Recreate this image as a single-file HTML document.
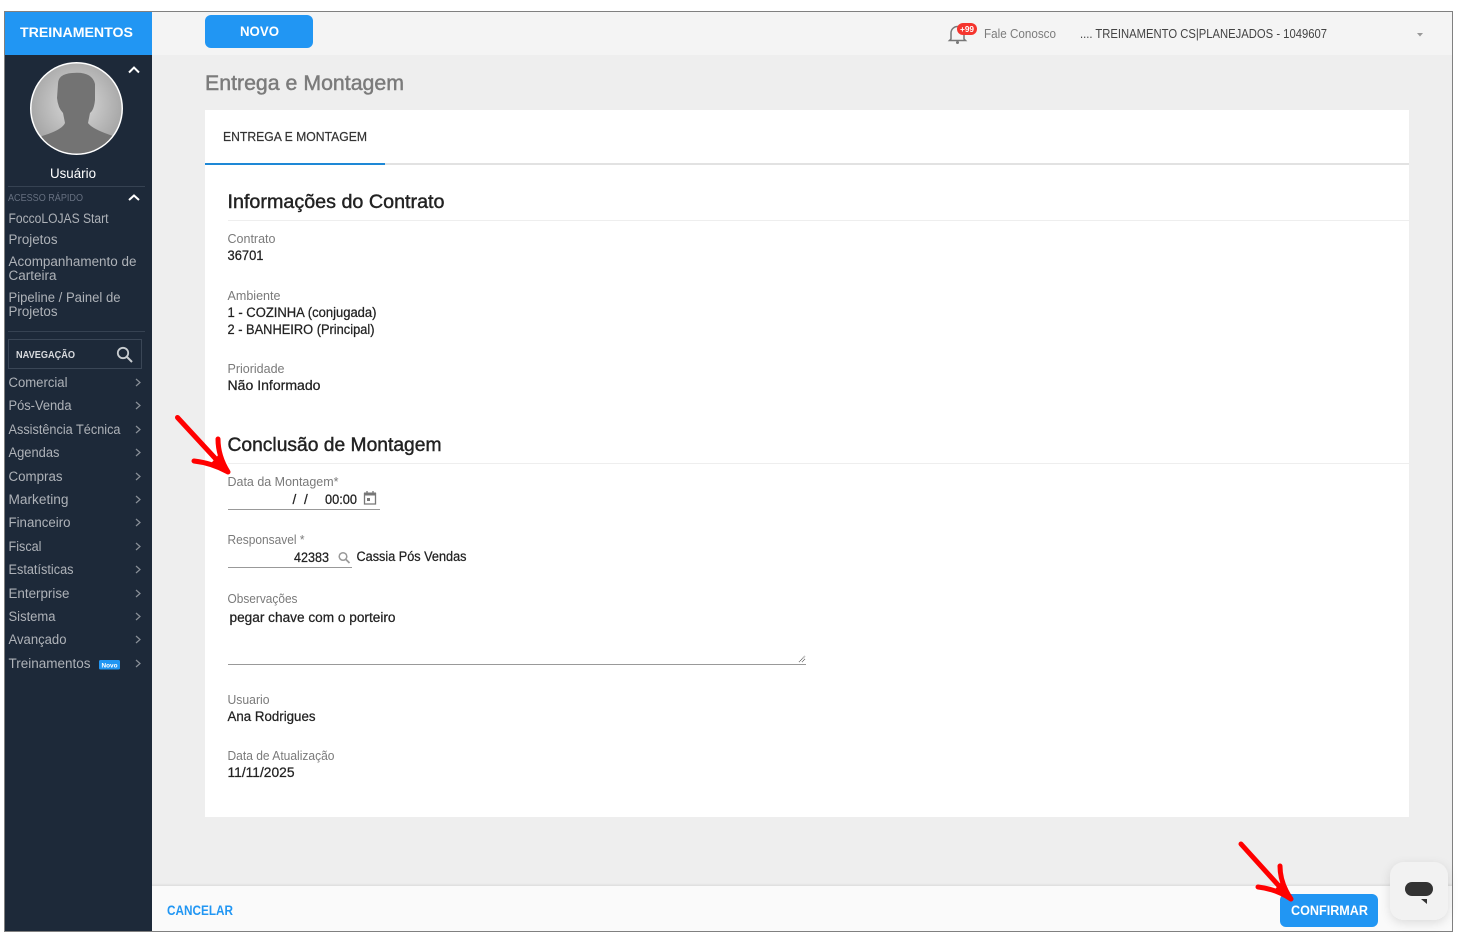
<!DOCTYPE html>
<html lang="pt"><head><meta charset="utf-8"><title>Entrega e Montagem</title>
<style>
html,body{margin:0;padding:0;background:#fff;width:1464px;height:937px;overflow:hidden}
svg{display:block;position:absolute;left:0;top:0}
text{font-family:"Liberation Sans",sans-serif;white-space:pre}
.s{font-size:13.5px;fill:#aeb2b8}
.l{font-size:12.5px;fill:#7a7a7a}
.v{font-size:13.5px;fill:#222;stroke:#222;stroke-width:.25px}
.h{font-size:19px;fill:#222;stroke:#222;stroke-width:.4px}
.c{fill:none;stroke:#8a9098;stroke-width:1.2}
.b{font-weight:bold}
</style></head><body>
<svg width="1464" height="937" viewBox="0 0 1464 937">
<defs>
<radialGradient id="av" cx="50%" cy="45%" r="55%"><stop offset="0" stop-color="#dcdcdc"/><stop offset="1" stop-color="#a4a4a4"/></radialGradient>
<clipPath id="cc"><circle cx="76.5" cy="108.5" r="45"/></clipPath>
<filter id="sh" x="-40%" y="-40%" width="180%" height="180%"><feDropShadow dx="0" dy="3" stdDeviation="5" flood-color="#000" flood-opacity=".12"/></filter>
<linearGradient id="fs" x1="0" y1="0" x2="0" y2="1"><stop offset="0" stop-color="#000" stop-opacity="0"/><stop offset="1" stop-color="#000" stop-opacity=".07"/></linearGradient>
</defs>

<!-- frame and backgrounds -->
<rect x="4.5" y="11.5" width="1448" height="920" fill="#eee" stroke="#808080"/>
<rect x="152" y="12" width="1300" height="43" fill="#f4f4f4"/>
<rect x="5" y="12" width="147" height="43" fill="#2196f3"/>
<rect x="5" y="55" width="147" height="876" fill="#1d2939"/>

<!-- brand -->
<text x="20" y="37" class="b" font-size="13.5" fill="#fff" textLength="113" lengthAdjust="spacingAndGlyphs">TREINAMENTOS</text>

<!-- avatar -->
<circle cx="76.5" cy="108.5" r="46.5" fill="#fff"/>
<circle cx="76.5" cy="108.5" r="45" fill="url(#av)"/>
<path clip-path="url(#cc)" fill="#737373" d="M58 84Q58 74 72 73Q92 71 95 84L95 100Q94 110 90 113L88 123Q92 129 113 136L125 160H28L42 136Q62 130 65 123L63 113Q58 108 57 98Z"/>
<path d="M129 72.500l5-5 5 5" fill="none" stroke="#fff" stroke-width="2"/>
<text x="50" y="178" font-size="13.5" fill="#fff" textLength="46" lengthAdjust="spacingAndGlyphs">Usuário</text>
<rect x="8" y="186" width="137" height="1" fill="#364252"/>

<!-- quick access -->
<text x="8" y="201" font-size="10" fill="#667080" textLength="75" lengthAdjust="spacingAndGlyphs">ACESSO RÁPIDO</text>
<path d="M129 200l5-4.500 5 4.500" fill="none" stroke="#fff" stroke-width="2"/>
<text x="8.500" y="223" class="s" textLength="100" lengthAdjust="spacingAndGlyphs">FoccoLOJAS Start</text>
<text x="8.500" y="244" class="s" textLength="49" lengthAdjust="spacingAndGlyphs">Projetos</text>
<text x="8.500" y="266" class="s" textLength="128" lengthAdjust="spacingAndGlyphs">Acompanhamento de</text>
<text x="8.500" y="280" class="s" textLength="48" lengthAdjust="spacingAndGlyphs">Carteira</text>
<text x="8.500" y="302" class="s" textLength="112" lengthAdjust="spacingAndGlyphs">Pipeline / Painel de</text>
<text x="8.500" y="316" class="s" textLength="49" lengthAdjust="spacingAndGlyphs">Projetos</text>
<rect x="8" y="331" width="137" height="1" fill="#364252"/>

<!-- nav search -->
<rect x="8.500" y="339.500" width="133" height="29" fill="none" stroke="#3a4656"/>
<text x="16" y="358" class="b" font-size="10" fill="#d8dade" textLength="59" lengthAdjust="spacingAndGlyphs">NAVEGAÇÃO</text>
<circle cx="123" cy="353" r="5.200" fill="none" stroke="#c8ccd0" stroke-width="1.800"/>
<path d="M127 357l5 5" stroke="#c8ccd0" stroke-width="2"/>

<!-- menu -->
<text x="8.500" y="387" class="s" textLength="59" lengthAdjust="spacingAndGlyphs">Comercial</text>
<text x="8.500" y="410" class="s" textLength="63" lengthAdjust="spacingAndGlyphs">Pós-Venda</text>
<text x="8.500" y="434" class="s" textLength="112" lengthAdjust="spacingAndGlyphs">Assistência Técnica</text>
<text x="8.500" y="457" class="s" textLength="51" lengthAdjust="spacingAndGlyphs">Agendas</text>
<text x="8.500" y="481" class="s" textLength="54" lengthAdjust="spacingAndGlyphs">Compras</text>
<text x="8.500" y="504" class="s" textLength="60" lengthAdjust="spacingAndGlyphs">Marketing</text>
<text x="8.500" y="527" class="s" textLength="62" lengthAdjust="spacingAndGlyphs">Financeiro</text>
<text x="8.500" y="551" class="s" textLength="33" lengthAdjust="spacingAndGlyphs">Fiscal</text>
<text x="8.500" y="574" class="s" textLength="65" lengthAdjust="spacingAndGlyphs">Estatísticas</text>
<text x="8.500" y="598" class="s" textLength="61" lengthAdjust="spacingAndGlyphs">Enterprise</text>
<text x="8.500" y="621" class="s" textLength="47" lengthAdjust="spacingAndGlyphs">Sistema</text>
<text x="8.500" y="644" class="s" textLength="58" lengthAdjust="spacingAndGlyphs">Avançado</text>
<text x="8.500" y="668" class="s" textLength="82" lengthAdjust="spacingAndGlyphs">Treinamentos</text>
<rect x="99" y="660" width="21" height="9.500" rx="1.500" fill="#2196f3"/>
<text x="101.500" y="667.500" class="b" font-size="6.500" fill="#fff" textLength="16" lengthAdjust="spacingAndGlyphs">Novo</text>
<path class="c" d="M136 379l4 3.500-4 3.500M136 402l4 3.500-4 3.500M136 426l4 3.500-4 3.500M136 449l4 3.500-4 3.500M136 473l4 3.500-4 3.500M136 496l4 3.500-4 3.500M136 519l4 3.500-4 3.500M136 543l4 3.500-4 3.500M136 566l4 3.500-4 3.500M136 590l4 3.500-4 3.500M136 613l4 3.500-4 3.500M136 636l4 3.500-4 3.500M136 660l4 3.500-4 3.500"/>

<!-- top bar -->
<rect x="205" y="15" width="108" height="33" rx="6" fill="#2196f3"/>
<text x="240" y="36" class="b" font-size="13.500" fill="#fff" textLength="39" lengthAdjust="spacingAndGlyphs">NOVO</text>
<path d="M951 39V33a6.500 6.500 0 0 1 13 0v6l1.500 1.500h-16Z" fill="none" stroke="#777" stroke-width="1.500"/>
<circle cx="957.500" cy="42.500" r="1.500" fill="#777"/>
<rect x="957" y="23" width="20" height="12" rx="6" fill="#f5352e"/>
<text x="960" y="32" class="b" font-size="8" fill="#fff" textLength="14" lengthAdjust="spacingAndGlyphs">+99</text>
<text x="984" y="38" font-size="12.500" fill="#7c7c7c" textLength="72" lengthAdjust="spacingAndGlyphs">Fale Conosco</text>
<text x="1080" y="38" font-size="12.500" fill="#444" textLength="247" lengthAdjust="spacingAndGlyphs">.... TREINAMENTO CS|PLANEJADOS - 1049607</text>
<path d="M1417 33h6l-3 3.500z" fill="#999"/>

<!-- page title -->
<text x="205" y="90" font-size="21" fill="#7b7b7b" stroke="#7b7b7b" stroke-width=".45" textLength="199" lengthAdjust="spacingAndGlyphs">Entrega e Montagem</text>

<!-- card -->
<rect x="205" y="110" width="1204" height="707" fill="#fff"/>
<text x="223" y="141" font-size="13" fill="#333" stroke="#333" stroke-width=".2" textLength="144" lengthAdjust="spacingAndGlyphs">ENTREGA E MONTAGEM</text>
<rect x="385" y="163" width="1024" height="2" fill="#e2e2e2"/>
<rect x="205" y="163" width="180" height="2" fill="#1e88d6"/>

<text x="227.500" y="208" class="h" textLength="217" lengthAdjust="spacingAndGlyphs">Informações do Contrato</text>
<rect x="228" y="220" width="1181" height="1" fill="#eee"/>
<text x="227.500" y="243" class="l" textLength="48" lengthAdjust="spacingAndGlyphs">Contrato</text>
<text x="227.500" y="260" class="v" textLength="36" lengthAdjust="spacingAndGlyphs">36701</text>
<text x="227.500" y="300" class="l" textLength="53" lengthAdjust="spacingAndGlyphs">Ambiente</text>
<text x="227.500" y="317" class="v" textLength="149" lengthAdjust="spacingAndGlyphs">1 - COZINHA (conjugada)</text>
<text x="227.500" y="334" class="v" textLength="147" lengthAdjust="spacingAndGlyphs">2 - BANHEIRO (Principal)</text>
<text x="227.500" y="373" class="l" textLength="57" lengthAdjust="spacingAndGlyphs">Prioridade</text>
<text x="227.500" y="390" class="v" textLength="93" lengthAdjust="spacingAndGlyphs">Não Informado</text>

<text x="227.500" y="451" class="h" textLength="214" lengthAdjust="spacingAndGlyphs">Conclusão de Montagem</text>
<rect x="228" y="463" width="1181" height="1" fill="#eee"/>
<text x="227.500" y="486" class="l" textLength="111" lengthAdjust="spacingAndGlyphs">Data da Montagem*</text>
<text x="292.500" y="504" class="v">/</text>
<text x="304" y="504" class="v">/</text>
<text x="325" y="504" class="v" textLength="32" lengthAdjust="spacingAndGlyphs">00:00</text>
<path d="M364.500 493.500h11v10.500h-11z" fill="none" stroke="#777" stroke-width="1.300"/>
<rect x="364" y="492.500" width="12" height="3" fill="#777"/>
<path d="M367 491v2M373 491v2" stroke="#777" stroke-width="1.300"/>
<rect x="367" y="498" width="3" height="3" fill="#777"/>
<rect x="228" y="509" width="152" height="1" fill="#999"/>

<text x="227.500" y="544" class="l" textLength="77" lengthAdjust="spacingAndGlyphs">Responsavel *</text>
<text x="294" y="562" class="v" textLength="35" lengthAdjust="spacingAndGlyphs">42383</text>
<circle cx="343" cy="556.500" r="3.800" fill="none" stroke="#999" stroke-width="1.500"/>
<path d="M346 559.500l3.500 3.500" stroke="#999" stroke-width="1.700"/>
<text x="356.500" y="561" class="v" textLength="110" lengthAdjust="spacingAndGlyphs">Cassia Pós Vendas</text>
<rect x="228" y="567" width="124" height="1" fill="#999"/>

<text x="227.500" y="603" class="l" textLength="70" lengthAdjust="spacingAndGlyphs">Observações</text>
<text x="229.500" y="622" class="v" textLength="166" lengthAdjust="spacingAndGlyphs">pegar chave com o porteiro</text>
<rect x="228" y="664" width="578" height="1" fill="#999"/>
<path d="M799 662l6-6M802 662l3-3" stroke="#666" stroke-width="1" stroke-dasharray="1 .6"/>

<text x="227.500" y="704" class="l" textLength="42" lengthAdjust="spacingAndGlyphs">Usuario</text>
<text x="227.500" y="721" class="v" textLength="88" lengthAdjust="spacingAndGlyphs">Ana Rodrigues</text>
<text x="227.500" y="760" class="l" textLength="107" lengthAdjust="spacingAndGlyphs">Data de Atualização</text>
<text x="227.500" y="777" class="v" textLength="67" lengthAdjust="spacingAndGlyphs">11/11/2025</text>

<!-- footer -->
<rect x="152" y="883" width="1300" height="3" fill="url(#fs)"/>
<rect x="152" y="886" width="1300" height="45" fill="#fafafa"/>
<text x="167" y="915" class="b" font-size="13.500" fill="#2196f3" textLength="66" lengthAdjust="spacingAndGlyphs">CANCELAR</text>
<rect x="1280" y="894" width="98" height="33" rx="6" fill="#2196f3"/>
<text x="1291" y="915" class="b" font-size="13.500" fill="#fff" textLength="77" lengthAdjust="spacingAndGlyphs">CONFIRMAR</text>

<!-- chat widget -->
<rect x="1390" y="862" width="58" height="58" rx="14" fill="#f2f2f2" filter="url(#sh)"/>
<rect x="1405" y="882" width="28" height="14" rx="7" fill="#333"/>
<path d="M1421 899h6v5z" fill="#333"/>

<!-- red annotation arrows -->
<g fill="none" stroke="#f00" stroke-linecap="round" stroke-linejoin="round">
<path d="M177.500 417.500L226 470" stroke-width="5"/>
<path d="M194 461Q212 463 228 472M218 439Q218 456 228 472" stroke-width="5"/>
<path d="M212 463L219 455L228 472Z" stroke-width="1" fill="#f00"/>
<path d="M1241 844L1289 897" stroke-width="5"/>
<path d="M1258 887Q1276 889 1291 899M1280 866Q1280 883 1291 899" stroke-width="5"/>
<path d="M1275 890L1282 882L1291 899Z" stroke-width="1" fill="#f00"/>
</g>
</svg>
</body></html>
